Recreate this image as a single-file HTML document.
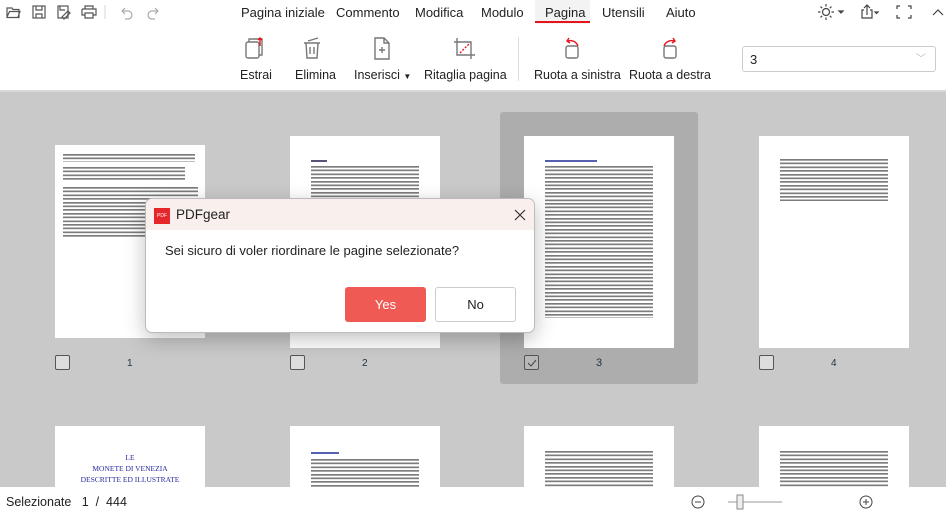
<!DOCTYPE html>
<html><head><meta charset="utf-8"><style>
*{box-sizing:border-box;margin:0;padding:0}
body{width:946px;height:510px;overflow:hidden;font-family:"Liberation Sans",sans-serif;background:#c9c9c9;position:relative;font-size:13px;color:#222}
.abs{position:absolute}
.top{left:0;top:0;width:946px;height:92px;background:#fff;border-bottom:2px solid #d8d8d8}
.tab{position:absolute;top:5px;font-size:13px;color:#222}
.lbl{position:absolute;top:68px;font-size:12.5px;color:#222}
.page{position:absolute;background:#fff}
.txt{position:absolute;background:repeating-linear-gradient(to bottom,#444 0,#444 1.5px,#bbb 1.5px,#bbb 2px,transparent 2px,transparent 3.7px);opacity:.7}
.cb{position:absolute;width:15px;height:15px;border:1px solid #555;border-radius:2px;background:#ddd}
.num{position:absolute;font-size:10px;color:#234}
svg{position:absolute}
</style></head><body>
<div class="abs top"></div>
<svg style="left:5px;top:4px" width="160" height="16" viewBox="0 0 160 16" fill="none" stroke="#555" stroke-width="1.2">
<path d="M2 4h5l1 1.5h6v8H2z M2 13l2.5-5.5H15L13 13"/>
<rect x="28" y="2" width="12" height="12"/><path d="M31 2v4h6V2 M31 14v-4h6v4"/>
<rect x="53" y="2" width="10" height="12"/><path d="M55 2v4h5 M57 13l6-6 2 2-6 6z"/>
<path d="M80 5V2h8v3 M77 5h14v6h-3 M80 11H77V5 M80 9h8v5h-8z"/>
<path d="M100 1v14" stroke="#ddd"/>
<path d="M120 4l-3 3 3 3 M117 7h6a4 4 0 010 8h-3" stroke="#aaa"/>
<path d="M150 4l3 3-3 3 M153 7h-6a4 4 0 000 8h3" stroke="#aaa"/>
</svg>
<div class="tab" style="left:241px">Pagina iniziale</div>
<div class="tab" style="left:336px">Commento</div>
<div class="tab" style="left:415px">Modifica</div>
<div class="tab" style="left:481px">Modulo</div>
<div class="abs" style="left:535px;top:0;width:55px;height:24px;background:#f3f3f3"></div>
<div class="tab" style="left:545px">Pagina</div>
<div class="abs" style="left:535px;top:21px;width:55px;height:2px;background:#e5141d"></div>
<div class="tab" style="left:602px">Utensili</div>
<div class="tab" style="left:666px">Aiuto</div>
<svg style="left:815px;top:2px" width="130" height="20" viewBox="0 0 130 20" fill="none" stroke="#444" stroke-width="1.2">
<circle cx="11" cy="10" r="3.5"/><path d="M11 2v2.5M11 15.5V18M3 10h2.5M16.5 10H19M5.5 4.5l1.7 1.7M14.8 13.8l1.7 1.7M5.5 15.5l1.7-1.7M14.8 6.2l1.7-1.7"/>
<path d="M24 9l2 2 2-2z" fill="#444"/>
<path d="M49 8h-2v8h10V8h-2 M52 13V3 M49 6l3-3 3 3"/><path d="M60 10l1.5 1.5L63 10z" fill="#444"/>
<path d="M82 7V4h3 M93 4h3v3 M96 13v3h-3 M85 16h-3v-3"/>
<path d="M118 13l5-5 5 5"/>
</svg>
<svg style="left:240px;top:35px" width="300" height="26" viewBox="0 0 300 26" fill="none" stroke="#777" stroke-width="1.4">
<rect x="6" y="7" width="13" height="16" rx="2"/><path d="M9 7V4h13v16h-3"/><path d="M20 11V3M18 5l2-2 2 2" stroke="#e5141d"/>
<path d="M64 8h16M66 8l1 15h10l1-15M70 12v7M74 12v7M68 6l10-3"/>
<path d="M135 3h9l5 5v16h-14z M144 3v5h5 M139 15h6M142 12v6"/>
<path d="M217 3v17h18M214 7h17v17"/><path d="M220 18l10-10" stroke="#e5141d" stroke-dasharray="2 1.5"/>
</svg>
<div class="lbl" style="left:240px">Estrai</div>
<div class="lbl" style="left:295px">Elimina</div>
<div class="lbl" style="left:354px">Inserisci <span style="font-size:8px">▼</span></div>
<div class="lbl" style="left:424px">Ritaglia pagina</div>
<div class="abs" style="left:518px;top:37px;width:1px;height:44px;background:#ddd"></div>
<svg style="left:560px;top:35px" width="130" height="26" viewBox="0 0 130 26" fill="none" stroke-width="1.4">
<rect x="6" y="11" width="12" height="12" rx="2" stroke="#777"/><path d="M8 6a8 8 0 0110 5M9 3l-2 3 3 2" stroke="#e5141d"/>
<rect x="104" y="11" width="12" height="12" rx="2" stroke="#777"/><path d="M114 6a8 8 0 00-10 5M113 3l2 3-3 2" stroke="#e5141d"/>
</svg>
<div class="lbl" style="left:534px">Ruota a sinistra</div>
<div class="lbl" style="left:629px">Ruota a destra</div>
<div class="abs" style="left:742px;top:46px;width:194px;height:26px;border:1px solid #ccc;border-radius:3px;padding:5px 7px;font-size:13px">3<span style="position:absolute;right:9px;top:3px;color:#bbb;font-size:10px">﹀</span></div>

<div class="abs" style="left:500px;top:112px;width:198px;height:272px;background:#adadad;border-radius:3px"></div>
<div class="page" style="left:55px;top:145px;width:150px;height:193px">
<div class="txt" style="left:8px;top:9px;width:132px;height:8px"></div>
<div class="txt" style="left:8px;top:22px;width:122px;height:15px"></div>
<div class="txt" style="left:8px;top:42px;width:135px;height:50px"></div>
</div>
<div class="page" style="left:290px;top:136px;width:150px;height:212px">
<div class="abs" style="left:21px;top:24px;width:16px;height:2px;background:#557"></div>
<div class="txt" style="left:21px;top:30px;width:108px;height:33px"></div>
</div>
<div class="page" style="left:524px;top:136px;width:150px;height:212px">
<div class="abs" style="left:21px;top:24px;width:52px;height:2px;background:#5560b0"></div>
<div class="txt" style="left:21px;top:30px;width:108px;height:152px"></div>
</div>
<div class="page" style="left:759px;top:136px;width:150px;height:212px">
<div class="txt" style="left:21px;top:23px;width:108px;height:42px"></div>
</div>
<div class="cb" style="left:55px;top:355px"></div>
<div class="cb" style="left:290px;top:355px"></div>
<div class="cb" style="left:524px;top:355px;background:#b8b8b8"><svg style="left:2px;top:2px" width="10" height="10"><path d="M1 5l3 3 5-6" stroke="#444" fill="none"/></svg></div>
<div class="cb" style="left:759px;top:355px"></div>
<div class="num" style="left:127px;top:358px">1</div>
<div class="num" style="left:362px;top:358px">2</div>
<div class="num" style="left:596px;top:357px;font-size:11px">3</div>
<div class="num" style="left:831px;top:358px">4</div>
<div class="page" style="left:55px;top:426px;width:150px;height:61px;text-align:center;font-family:'Liberation Serif',serif;font-size:7.5px;color:#2a2aa0;line-height:11px;padding-top:26px">LE<br>MONETE DI VENEZIA<br>DESCRITTE ED ILLUSTRATE<br>DA<br>NICOLÒ PAPADOPOLI</div>
<div class="page" style="left:290px;top:426px;width:150px;height:61px"><div class="abs" style="left:21px;top:26px;width:28px;height:2px;background:#5560b0"></div><div class="txt" style="left:21px;top:33px;width:108px;height:28px"></div></div>
<div class="page" style="left:524px;top:426px;width:150px;height:61px"><div class="txt" style="left:21px;top:25px;width:108px;height:36px"></div></div>
<div class="page" style="left:759px;top:426px;width:150px;height:61px"><div class="txt" style="left:21px;top:25px;width:108px;height:36px"></div></div>
<div class="abs" style="left:0;top:487px;width:946px;height:23px;background:#fff"></div>
<div class="abs" style="left:6px;top:495px;font-size:12.5px">Selezionate &nbsp; 1 &nbsp;/ &nbsp;444</div>
<svg style="left:690px;top:494px" width="185" height="16" viewBox="0 0 185 16" fill="none" stroke="#444">
<circle cx="8" cy="8" r="6"/><path d="M5 8h6"/>
<path d="M38 8h54" stroke="#ccc" stroke-width="2"/><rect x="47" y="1" width="6" height="14" fill="#eee" stroke="#888"/>
<circle cx="176" cy="8" r="6"/><path d="M173 8h6M176 5v6"/>
</svg>
<div class="abs" style="left:145px;top:198px;width:390px;height:135px;background:#fff;border:1px solid #bbb;border-radius:7px;overflow:hidden;box-shadow:0 6px 20px rgba(0,0,0,.25)">
<div class="abs" style="left:0;top:0;width:390px;height:31px;background:#f9efed"></div>
<div class="abs" style="left:8px;top:9px;width:16px;height:16px;background:#e5262b;color:#fff;font-size:5px;line-height:16px;text-align:center">PDF</div>
<div class="abs" style="left:30px;top:8px;font-size:13.5px">PDFgear</div>
<svg style="left:368px;top:10px" width="12" height="12"><path d="M1 1l10 10M11 1L1 11" stroke="#333" stroke-width="1.2"/></svg>
<div class="abs" style="left:19px;top:44px;font-size:13px">Sei sicuro di voler riordinare le pagine selezionate?</div>
<div class="abs" style="left:199px;top:88px;width:81px;height:35px;background:#ef5a54;border-radius:3px;color:#fff;text-align:center;line-height:35px;font-size:13px">Yes</div>
<div class="abs" style="left:289px;top:88px;width:81px;height:35px;border:1px solid #ccc;border-radius:3px;text-align:center;line-height:33px;font-size:13px">No</div>
</div>
</body></html>
